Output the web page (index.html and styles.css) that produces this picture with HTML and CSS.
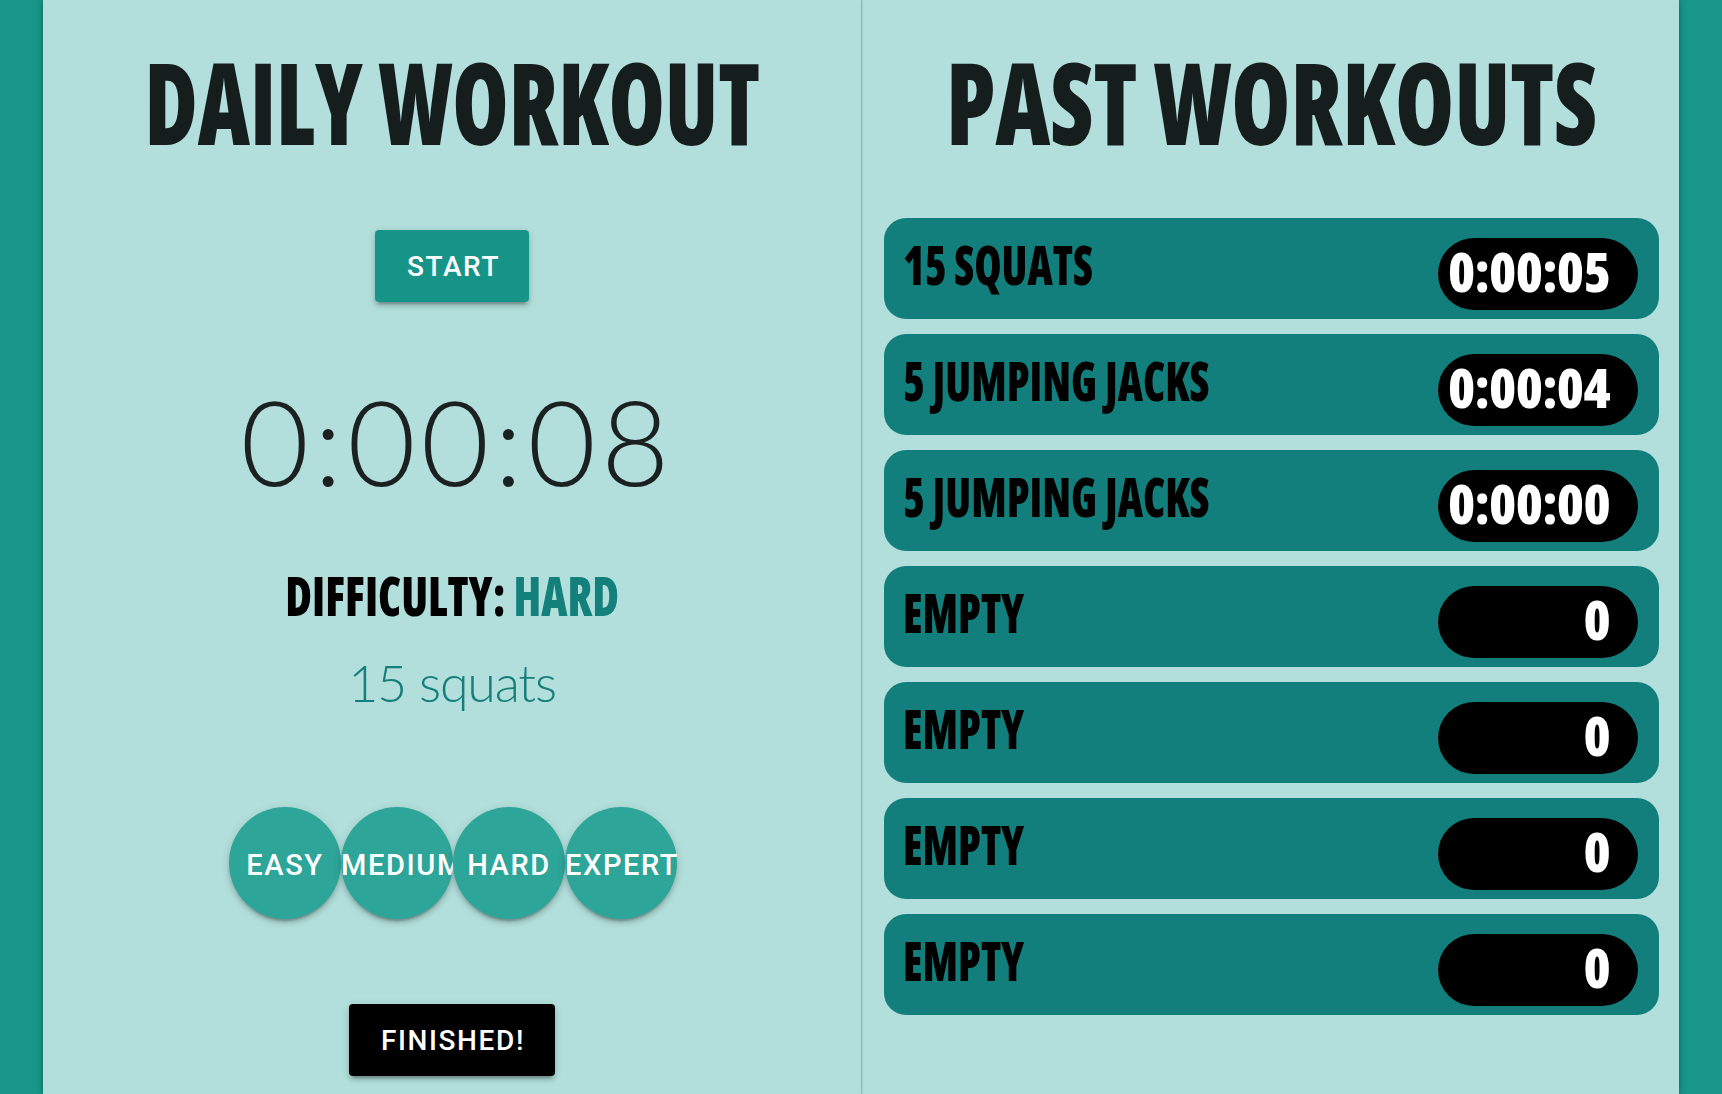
FILE: index.html
```html
<!DOCTYPE html>
<html lang="en">
<head>
<meta charset="utf-8">
<title>Workout Tracker</title>
<link rel="stylesheet" href="styles.css">
</head>
<body>
<main class="app">
  <section class="panel panel-daily">
    <h1 class="title"><span class="title-text title-daily">DAILY WORKOUT</span></h1>
    <button class="btn btn-start">START</button>
    <div class="timer">0:00:08</div>
    <h2 class="difficulty"><span class="difficulty-text">DIFFICULTY: <span class="difficulty-level">HARD</span></span></h2>
    <p class="exercise">15 squats</p>
    <div class="levels">
      <button class="level">EASY</button>
      <button class="level">MEDIUM</button>
      <button class="level">HARD</button>
      <button class="level">EXPERT</button>
    </div>
    <button class="btn btn-finish">FINISHED!</button>
  </section>
  <section class="panel panel-past">
    <h1 class="title"><span class="title-text title-past">PAST WORKOUTS</span></h1>
    <ul class="history">
      <li class="entry"><span class="entry-name">15 SQUATS</span><span class="entry-time"><span>0:00:05</span></span></li>
      <li class="entry"><span class="entry-name">5 JUMPING JACKS</span><span class="entry-time"><span>0:00:04</span></span></li>
      <li class="entry"><span class="entry-name">5 JUMPING JACKS</span><span class="entry-time"><span>0:00:00</span></span></li>
      <li class="entry"><span class="entry-name">EMPTY</span><span class="entry-time"><span>0</span></span></li>
      <li class="entry"><span class="entry-name">EMPTY</span><span class="entry-time"><span>0</span></span></li>
      <li class="entry"><span class="entry-name">EMPTY</span><span class="entry-time"><span>0</span></span></li>
      <li class="entry"><span class="entry-name">EMPTY</span><span class="entry-time"><span>0</span></span></li>
    </ul>
  </section>
</main>
</body>
</html>
```
FILE: styles.css
```css
html, body {
  margin: 0;
  height: 100%;
  overflow: hidden;
}

body {
  background: #179689;
  font-family: Roboto, "Liberation Sans", sans-serif;
}

.app {
  width: 95%;
  height: 100vh;
  margin: 0 auto;
  background: #b2dfdb;
  display: grid;
  grid-template-columns: 1fr 1fr;
  box-shadow: 0 0 6px rgba(0, 0, 0, 0.35);
}

.panel {
  padding-top: 42px;
  display: flex;
  flex-direction: column;
  align-items: center;
  min-width: 0;
}

.panel-daily {
  box-shadow: 1px 0 3px rgba(0, 0, 0, 0.12);
}

.panel-past {
  border-left: 1px solid rgba(0, 0, 0, 0.12);
  padding-left: 22px;
  padding-right: 20px;
  align-items: stretch;
}

.title-text,
.difficulty,
.entry-name,
.entry-time span {
  font-family: "Open Sans", "DejaVu Sans", sans-serif;
  font-stretch: 75%;
  font-weight: 800;
}

.title {
  margin: 0;
  display: flex;
  justify-content: center;
  font-size: 114px;
  line-height: 118px;
  color: #161d1d;
  white-space: nowrap;
}

.title-text {
  display: inline-block;
}

.title-daily {
  transform: scaleX(0.797);
}

.title-past {
  transform: scaleX(0.836);
}

.btn {
  border: none;
  border-radius: 4px;
  height: 72px;
  padding: 0 32px;
  font-family: Roboto, "Liberation Sans", sans-serif;
  font-weight: 500;
  font-size: 28px;
  letter-spacing: 1.6px;
  color: #ffffff;
  cursor: pointer;
  box-shadow: 0 6px 2px -4px rgba(0, 0, 0, 0.2), 0 4px 4px 0 rgba(0, 0, 0, 0.14), 0 2px 10px 0 rgba(0, 0, 0, 0.12);
}

.btn-start {
  margin-top: 70px;
  background: #169488;
  width: 154px;
}

.btn-finish {
  margin-top: 85px;
  background: #000000;
  width: 206px;
}

.timer {
  margin-top: 68px;
  padding-left: 11px;
  font-family: Lato, "Open Sans", sans-serif;
  font-weight: 300;
  font-size: 118px;
  line-height: 142px;
  letter-spacing: 5px;
  color: #1b2121;
}

.difficulty {
  margin: 55px 0 0;
  font-size: 55px;
  line-height: 55px;
  color: #000000;
  text-align: center;
  white-space: nowrap;
}

.difficulty-text {
  display: inline-block;
  transform: scaleX(0.83);
}

.difficulty-level {
  color: #13807c;
}

.exercise {
  margin: 29px 0 0;
  font-family: Lato, "Open Sans", sans-serif;
  font-weight: 300;
  font-size: 52px;
  line-height: 62px;
  letter-spacing: -1.2px;
  color: #177f7b;
}

.levels {
  margin-top: 94px;
  display: flex;
  justify-content: center;
  padding-left: 2px;
}

.level {
  width: 112px;
  height: 112px;
  padding: 4px 0 0;
  border: none;
  border-radius: 50%;
  background: #2da599;
  color: #ffffff;
  font-family: Roboto, "Liberation Sans", sans-serif;
  font-weight: 500;
  font-size: 29px;
  letter-spacing: 1.6px;
  line-height: 32px;
  text-align: center;
  white-space: nowrap;
  box-shadow: 0 6px 2px -4px rgba(0, 0, 0, 0.2), 0 4px 4px 0 rgba(0, 0, 0, 0.14), 0 2px 10px 0 rgba(0, 0, 0, 0.12);
}

.history {
  list-style: none;
  margin: 58px 0 0;
  padding: 0;
  display: flex;
  flex-direction: column;
  gap: 15px;
}

.entry {
  height: 101px;
  box-sizing: border-box;
  padding: 0 21px 0 19px;
  border-radius: 22px;
  background: #137f7c;
  display: flex;
  align-items: center;
  justify-content: space-between;
}

.entry-name {
  display: inline-block;
  font-size: 55px;
  line-height: 55px;
  color: #000000;
  white-space: nowrap;
  transform: scaleX(0.8);
  transform-origin: left center;
  margin-bottom: 10px;
}

.entry-time {
  width: 200px;
  height: 72px;
  box-sizing: border-box;
  margin-top: 11px;
  padding-right: 28px;
  border-radius: 36px;
  background: #000000;
  display: flex;
  align-items: center;
  justify-content: flex-end;
}

.entry-time span {
  display: inline-block;
  font-size: 55px;
  line-height: 55px;
  letter-spacing: -0.7px;
  color: #ffffff;
  white-space: nowrap;
  margin-bottom: 8px;
}
```
